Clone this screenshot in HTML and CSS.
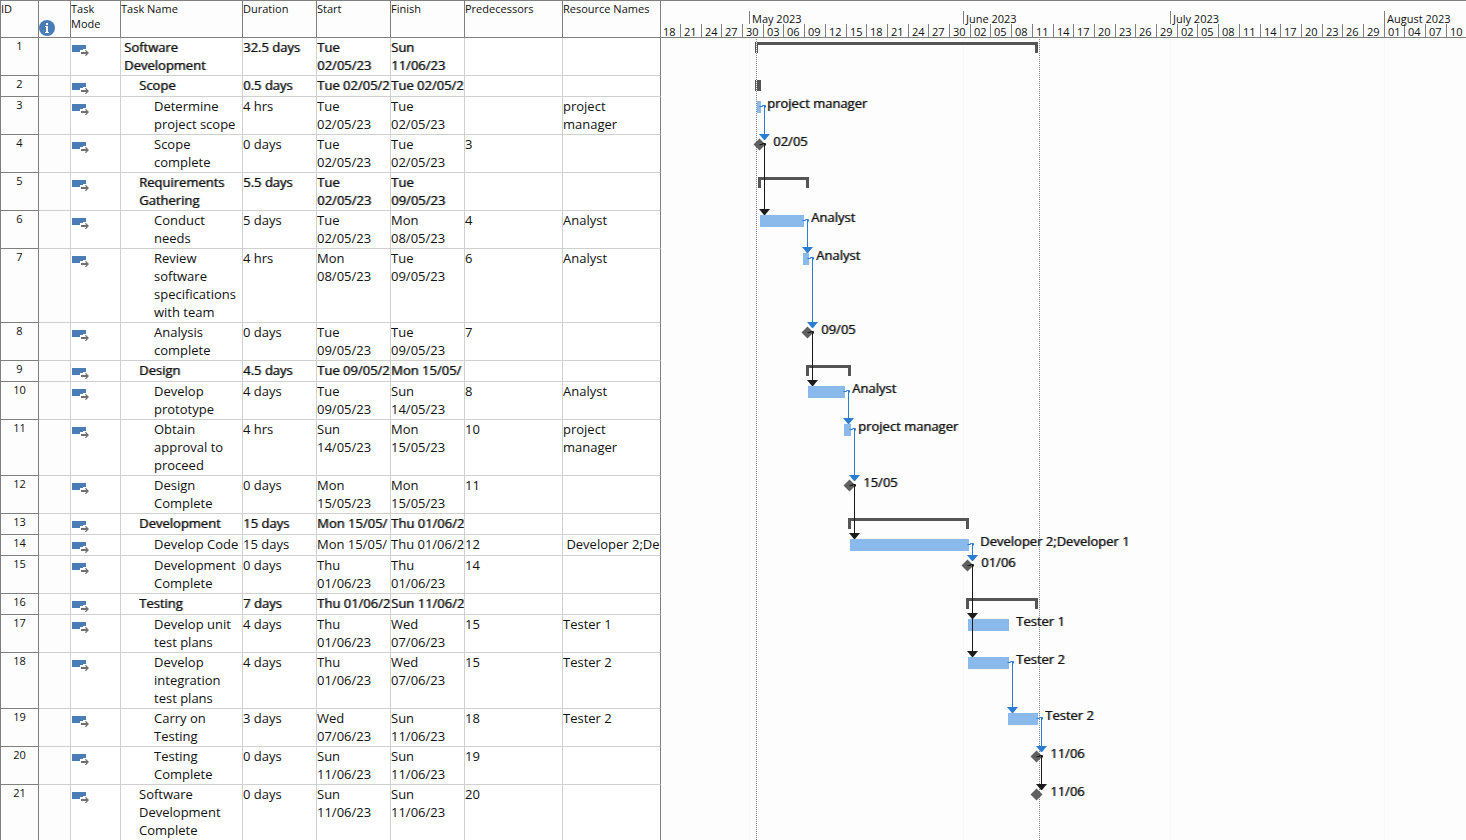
FILE: index.html
```html
<!DOCTYPE html>
<html lang="en">
<head>
<meta charset="utf-8">
<title>Software Development plan</title>
<link rel="stylesheet" href="styles.css">
</head>
<body>
<svg class="defs" aria-hidden="true">
  <symbol id="auto" viewBox="0 0 17 12"><path fill="#4a7db5" d="M0 0h14v7H0z"/><path fill="#fff" d="M8 5h3V4h3v3H8z"/><path fill="#707070" d="M9 7h3V5h2l3 3-3 3h-2V9H9z"/><path fill="#fff" d="M11 5h1v2h-1zM12 5l1 0 1 2h-2zM12 9h2l-1 2h-1z"/></symbol>
</svg>
<main class="project">
<table class="tasks">
<colgroup><col class="c-id"><col class="c-info"><col class="c-mode"><col class="c-name"><col class="c-date"><col class="c-date"><col class="c-date"><col class="c-wide"><col class="c-wide"></colgroup>
<thead><tr><th>ID</th><th class="info"><svg width="16" height="16" viewBox="0 0 16 16" role="img" aria-label="Indicators"><circle cx="8" cy="8" r="8" fill="#4a7db5"/><path fill="#fff" d="M7 3h2v2H7zM6 6h3v6h1v1H6v-1h1V7H6z"/></svg></th><th>Task<br>Mode</th><th>Task Name</th><th>Duration</th><th>Start</th><th>Finish</th><th>Predecessors</th><th>Resource Names</th></tr></thead>
<tbody>
<tr class="sum"><th>1</th><td></td><td class="mode"><svg><use href="#auto"/></svg></td><td class="l1">Software<br>Development</td><td>32.5 days</td><td>Tue<br>02/05/23</td><td>Sun<br>11/06/23</td><td></td><td></td></tr>
<tr class="sum"><th>2</th><td></td><td class="mode"><svg><use href="#auto"/></svg></td><td class="l2">Scope</td><td>0.5 days</td><td>Tue 02/05/2</td><td>Tue 02/05/2</td><td></td><td></td></tr>
<tr><th>3</th><td></td><td class="mode"><svg><use href="#auto"/></svg></td><td class="l3">Determine<br>project scope</td><td>4 hrs</td><td>Tue<br>02/05/23</td><td>Tue<br>02/05/23</td><td></td><td>project<br>manager</td></tr>
<tr><th>4</th><td></td><td class="mode"><svg><use href="#auto"/></svg></td><td class="l3">Scope<br>complete</td><td>0 days</td><td>Tue<br>02/05/23</td><td>Tue<br>02/05/23</td><td>3</td><td></td></tr>
<tr class="sum"><th>5</th><td></td><td class="mode"><svg><use href="#auto"/></svg></td><td class="l2">Requirements<br>Gathering</td><td>5.5 days</td><td>Tue<br>02/05/23</td><td>Tue<br>09/05/23</td><td></td><td></td></tr>
<tr><th>6</th><td></td><td class="mode"><svg><use href="#auto"/></svg></td><td class="l3">Conduct<br>needs</td><td>5 days</td><td>Tue<br>02/05/23</td><td>Mon<br>08/05/23</td><td>4</td><td>Analyst</td></tr>
<tr><th>7</th><td></td><td class="mode"><svg><use href="#auto"/></svg></td><td class="l3">Review<br>software<br>specifications<br>with team</td><td>4 hrs</td><td>Mon<br>08/05/23</td><td>Tue<br>09/05/23</td><td>6</td><td>Analyst</td></tr>
<tr><th>8</th><td></td><td class="mode"><svg><use href="#auto"/></svg></td><td class="l3">Analysis<br>complete</td><td>0 days</td><td>Tue<br>09/05/23</td><td>Tue<br>09/05/23</td><td>7</td><td></td></tr>
<tr class="sum"><th>9</th><td></td><td class="mode"><svg><use href="#auto"/></svg></td><td class="l2">Design</td><td>4.5 days</td><td>Tue 09/05/2</td><td>Mon 15/05/</td><td></td><td></td></tr>
<tr><th>10</th><td></td><td class="mode"><svg><use href="#auto"/></svg></td><td class="l3">Develop<br>prototype</td><td>4 days</td><td>Tue<br>09/05/23</td><td>Sun<br>14/05/23</td><td>8</td><td>Analyst</td></tr>
<tr><th>11</th><td></td><td class="mode"><svg><use href="#auto"/></svg></td><td class="l3">Obtain<br>approval to<br>proceed</td><td>4 hrs</td><td>Sun<br>14/05/23</td><td>Mon<br>15/05/23</td><td>10</td><td>project<br>manager</td></tr>
<tr><th>12</th><td></td><td class="mode"><svg><use href="#auto"/></svg></td><td class="l3">Design<br>Complete</td><td>0 days</td><td>Mon<br>15/05/23</td><td>Mon<br>15/05/23</td><td>11</td><td></td></tr>
<tr class="sum"><th>13</th><td></td><td class="mode"><svg><use href="#auto"/></svg></td><td class="l2">Development</td><td>15 days</td><td>Mon 15/05/</td><td>Thu 01/06/2</td><td></td><td></td></tr>
<tr><th>14</th><td></td><td class="mode"><svg><use href="#auto"/></svg></td><td class="l3">Develop Code</td><td>15 days</td><td>Mon 15/05/</td><td>Thu 01/06/2</td><td>12</td><td>&nbsp;Developer 2;De</td></tr>
<tr><th>15</th><td></td><td class="mode"><svg><use href="#auto"/></svg></td><td class="l3">Development<br>Complete</td><td>0 days</td><td>Thu<br>01/06/23</td><td>Thu<br>01/06/23</td><td>14</td><td></td></tr>
<tr class="sum"><th>16</th><td></td><td class="mode"><svg><use href="#auto"/></svg></td><td class="l2">Testing</td><td>7 days</td><td>Thu 01/06/2</td><td>Sun 11/06/2</td><td></td><td></td></tr>
<tr><th>17</th><td></td><td class="mode"><svg><use href="#auto"/></svg></td><td class="l3">Develop unit<br>test plans</td><td>4 days</td><td>Thu<br>01/06/23</td><td>Wed<br>07/06/23</td><td>15</td><td>Tester 1</td></tr>
<tr><th>18</th><td></td><td class="mode"><svg><use href="#auto"/></svg></td><td class="l3">Develop<br>integration<br>test plans</td><td>4 days</td><td>Thu<br>01/06/23</td><td>Wed<br>07/06/23</td><td>15</td><td>Tester 2</td></tr>
<tr><th>19</th><td></td><td class="mode"><svg><use href="#auto"/></svg></td><td class="l3">Carry on<br>Testing</td><td>3 days</td><td>Wed<br>07/06/23</td><td>Sun<br>11/06/23</td><td>18</td><td>Tester 2</td></tr>
<tr><th>20</th><td></td><td class="mode"><svg><use href="#auto"/></svg></td><td class="l3">Testing<br>Complete</td><td>0 days</td><td>Sun<br>11/06/23</td><td>Sun<br>11/06/23</td><td>19</td><td></td></tr>
<tr><th>21</th><td></td><td class="mode"><svg><use href="#auto"/></svg></td><td class="l2">Software<br>Development<br>Complete</td><td>0 days</td><td>Sun<br>11/06/23</td><td>Sun<br>11/06/23</td><td>20</td><td></td></tr>
</tbody>
</table>
<section class="gantt" aria-label="Gantt chart">
<svg class="chart" height="840">
<defs>
  <path id="head" d="M-5 0H6L1 6H0z"/>
  <path id="stone" d="M0-6 6 0 0 6-6 0z"/>
  <path id="hook" d="M-3 2h3v-1h3v2" fill="none"/>
</defs>
<g transform="translate(-661 0)">
<!-- month boundaries in the chart body -->
<path class="faint" d="M749.500 38V840M963.500 38V840M1170.500 38V840M1384.500 38V840"/>
<!-- time scale -->
<path class="rule" d="M661 .5H4000M661 37.500H4000M749.500 11v13M963.500 11v13M1170.500 11v13M1384.500 11v13"/>
<path class="rule" d="M680.500 24v13M701.500 24v13M721.500 24v13M742.500 24v13M763.500 24v13M783.500 24v13M804.500 24v13M825.500 24v13M846.500 24v13M866.500 24v13M887.500 24v13M908.500 24v13M928.500 24v13M949.500 24v13M970.500 24v13M990.500 24v13M1011.500 24v13M1032.500 24v13M1053.500 24v13M1073.500 24v13M1094.500 24v13M1115.500 24v13M1135.500 24v13M1156.500 24v13M1177.500 24v13M1197.500 24v13M1218.500 24v13M1239.500 24v13M1260.500 24v13M1280.500 24v13M1301.500 24v13M1322.500 24v13M1342.500 24v13M1363.500 24v13M1384.500 24v13M1404.500 24v13M1425.500 24v13M1446.500 24v13"/>
<g class="scale">
<text x="752" y="23">May 2023</text><text x="966" y="23">June 2023</text><text x="1173" y="23">July 2023</text><text x="1387" y="23">August 2023</text>
<text x="663" y="36">18</text><text x="684" y="36">21</text><text x="705" y="36">24</text><text x="725" y="36">27</text><text x="746" y="36">30</text><text x="767" y="36">03</text><text x="787" y="36">06</text><text x="808" y="36">09</text><text x="829" y="36">12</text><text x="850" y="36">15</text><text x="870" y="36">18</text><text x="891" y="36">21</text><text x="912" y="36">24</text><text x="932" y="36">27</text><text x="953" y="36">30</text><text x="974" y="36">02</text><text x="994" y="36">05</text><text x="1015" y="36">08</text><text x="1036" y="36">11</text><text x="1057" y="36">14</text><text x="1077" y="36">17</text><text x="1098" y="36">20</text><text x="1119" y="36">23</text><text x="1139" y="36">26</text><text x="1160" y="36">29</text><text x="1181" y="36">02</text><text x="1201" y="36">05</text><text x="1222" y="36">08</text><text x="1243" y="36">11</text><text x="1264" y="36">14</text><text x="1284" y="36">17</text><text x="1305" y="36">20</text><text x="1326" y="36">23</text><text x="1346" y="36">26</text><text x="1367" y="36">29</text><text x="1388" y="36">01</text><text x="1408" y="36">04</text><text x="1429" y="36">07</text><text x="1450" y="36">10</text>
</g>
<!-- summary brackets -->
<g class="summary">
<path d="M755 42h283v11h-3v-8H758v8h-3zM755 80h6v11h-6z"/>
<path d="M758 177h51v11h-3v-8h-45v8h-3z"/>
<path d="M806 365h45v11h-3v-8h-39v8h-3z"/>
<path d="M848 518h121v11h-3v-8H851v8h-3z"/>
<path d="M966 598h72v11h-3v-8h-66v8h-3z"/>
</g>
<!-- task bars -->
<path class="bar" d="M757 101h4v12h-4zM760 215h44v12h-44zM803 253h6v12h-6zM808 386h37v12h-37zM844 424h7v12h-7zM850 539h119v12H850zM968 619h41v12h-41zM968 657h41v12h-41zM1008 713h30v12h-30z"/>
<!-- project start and finish -->
<path class="limit" d="M756.500 39V840M1039.500 39V840"/>
<path class="limit-on" d="M756.500 42v11M756.500 80v11"/>
<!-- milestones -->
<g class="stone">
<use href="#stone" x="759.500" y="144.500"/><use href="#stone" x="807.500" y="332.500"/><use href="#stone" x="849.500" y="485.500"/><use href="#stone" x="967.500" y="565.500"/><use href="#stone" x="1036.500" y="756.500"/><use href="#stone" x="1036.500" y="794.500"/>
</g>
<!-- links from bars -->
<g class="link blue">
<path d="M764.500 106v29M807.500 220v28M812.500 258v65M848.500 391v28M854.500 429v47M972.500 544v12M1012.500 662v46M1041.500 718v29"/>
<use href="#hook" x="762.500" y="104.500"/><use href="#hook" x="805.500" y="218.500"/><use href="#hook" x="810.500" y="256.500"/><use href="#hook" x="846.500" y="389.500"/><use href="#hook" x="852.500" y="427.500"/><use href="#hook" x="970.500" y="542.500"/><use href="#hook" x="1010.500" y="660.500"/><use href="#hook" x="1039.500" y="716.500"/>
</g>
<g class="blue-fill">
<use href="#head" x="764" y="134"/><use href="#head" x="807" y="247"/><use href="#head" x="812" y="322"/><use href="#head" x="848" y="418"/><use href="#head" x="854" y="475"/><use href="#head" x="972" y="555"/><use href="#head" x="1012" y="707"/><use href="#head" x="1041" y="746"/>
</g>
<!-- links from milestones -->
<g class="link">
<path d="M764.500 144v66M812.500 332v49M854.500 485v49M972.500 565v87M1041.500 756v29"/>
<use href="#hook" x="762.500" y="142.500"/><use href="#hook" x="810.500" y="330.500"/><use href="#hook" x="852.500" y="483.500"/><use href="#hook" x="970.500" y="563.500"/><use href="#hook" x="1039.500" y="754.500"/>
</g>
<g class="black-fill">
<use href="#head" x="764" y="209"/><use href="#head" x="812" y="380"/><use href="#head" x="854" y="533"/><use href="#head" x="972" y="613"/><use href="#head" x="972" y="651"/><use href="#head" x="1041" y="784"/>
</g>
<g class="label">
<text x="767" y="108">project manager</text><text x="773" y="146">02/05</text><text x="811" y="222">Analyst</text><text x="816" y="260">Analyst</text><text x="821" y="334">09/05</text><text x="852" y="393">Analyst</text><text x="858" y="431">project manager</text><text x="863" y="487">15/05</text><text x="980" y="546">Developer 2;Developer 1</text><text x="981" y="567">01/06</text><text x="1016" y="626">Tester 1</text><text x="1016" y="664">Tester 2</text><text x="1045" y="720">Tester 2</text><text x="1050" y="758">11/06</text><text x="1050" y="796">11/06</text>
</g>
</g>
</svg>
</section>
</main>
</body>
</html>
```
FILE: styles.css
```css
body {
  margin: 0;
  background: #fdfdfd;
  color: #111;
  font: 13px/18px "Open Sans", "Noto Sans", sans-serif;
}
.defs { position: absolute; width: 0; height: 0; }
.project { display: flex; align-items: stretch; }

.tasks {
  flex: none;
  width: 661px;
  table-layout: fixed;
  border-collapse: separate;
  border-spacing: 0;
}
.c-id { width: 39px; }
.c-info { width: 32px; }
.c-mode { width: 50px; }
.c-name { width: 122px; }
.c-date { width: 74px; }
.c-wide { width: 98px; }

th, td {
  box-sizing: border-box;
  padding: 0;
  border: 0 solid #d0d0d0;
  border-width: 0 1px 1px 0;
  text-align: left;
  vertical-align: top;
  white-space: nowrap;
  overflow: hidden;
}
td { height: 21px; padding-bottom: 1px; background: #fff; }
th {
  border-color: #808080;
  font-size: 11px;
  line-height: 15px;
  font-weight: 400;
}
thead th {
  height: 38px;
  border-top-width: 1px;
}
thead .info { padding-bottom: 1px; vertical-align: bottom; }
.info svg { display: block; }
th:first-child { border-left-width: 1px; }
tbody th { text-align: center; }
td:nth-child(2) { background: #fdfdfd; }
td:last-child { border-right-color: #808080; }
tbody tr:last-child > * { border-bottom-width: 0; }

.mode svg { display: block; width: 17px; height: 12px; margin: 7px 0 0 1px; }
.l1 { padding-left: 3px; }
.l2 { padding-left: 18px; }
.l3 { padding-left: 33px; }
.sum td { text-shadow: 1px 0 #888; }

.gantt { flex: 1; min-width: 0; overflow: hidden; }
.chart { display: block; width: 100%; }
.rule { stroke: #808080; fill: none; }
.faint { stroke: #f8f8f8; }
.scale { font-size: 11px; fill: #111; }
.summary { fill: #555; }
.bar { fill: #8ab9ec; }
.stone { fill: #606060; }
.limit { stroke: #808080; stroke-dasharray: 1 1; }
.limit-on { stroke: #fff; stroke-dasharray: 1 1; }
.link { stroke: #1a1a1a; fill: none; }
.link.blue { stroke: #2b7cd3; }
.blue-fill { fill: #2b7cd3; }
.black-fill { fill: #1a1a1a; }
.label { fill: #111; text-shadow: 1px 0 #888; }
```
